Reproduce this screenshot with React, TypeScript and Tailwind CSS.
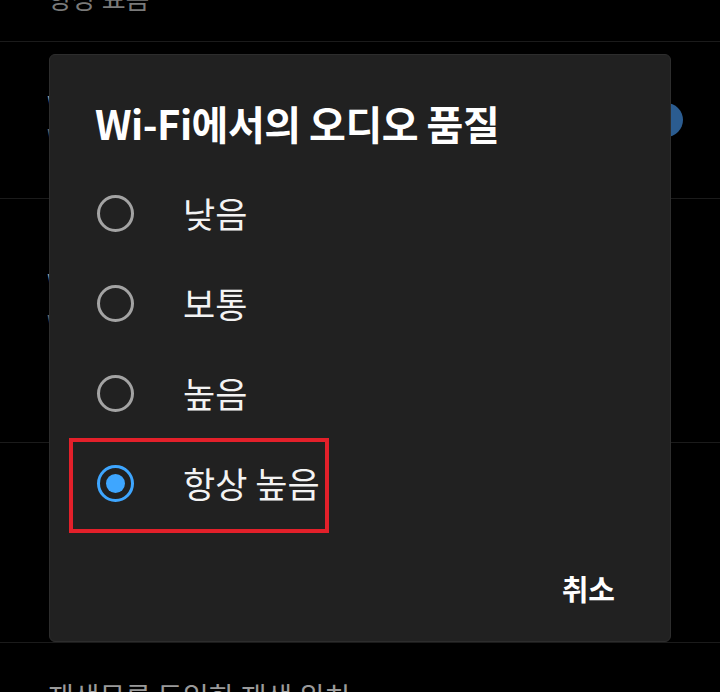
import { useState } from 'react';

const FONT = { fontFamily: '"Noto Sans CJK KR", "Noto Sans", sans-serif' };

const options = ['낮음', '보통', '높음', '항상 높음'];

function Radio({ checked }: { checked: boolean }) {
  return (
    <div
      className={`flex h-[37px] w-[37px] shrink-0 items-center justify-center rounded-full border-[3.5px] ${
        checked ? 'border-[#3ea6ff]' : 'border-[#a3a3a3]'
      }`}
    >
      {checked && <div className="h-[19px] w-[19px] rounded-full bg-[#3ea6ff]" />}
    </div>
  );
}

export default function App() {
  const [selected, setSelected] = useState(3);

  return (
    <div className="relative h-[692px] w-[720px] overflow-hidden bg-black" style={FONT}>
      {/* settings list behind the dialog */}
      <div className="flex flex-col">
        <div className="h-[42px] border-b border-[#1b1b1b] pl-[48px]">
          <p className="mt-[-18px] text-[26px] leading-[32px] text-[#7a7a7a]">항상 표음</p>
        </div>

        <div className="relative flex h-[157px] flex-col justify-center border-b border-[#1b1b1b] pl-[47px]">
          <p className="text-[28px] leading-[34px] text-[#9a9a9a]">Wi-Fi를 통해서만 스트리밍</p>
          <p className="text-[24px] leading-[30px] text-[#6a6a6a]">Wi-Fi 연결 시에만 재생</p>
          <div className="absolute left-[649px] top-[61px] h-[34px] w-[34px] rounded-full bg-[#2b5c90]" />
        </div>

        <div className="flex h-[244px] flex-col justify-center gap-[8px] border-b border-[#1b1b1b] pl-[47px]">
          <p className="text-[28px] leading-[34px] text-[#9a9a9a]">Wi-Fi에서의 오디오 품질</p>
          <p className="text-[24px] leading-[30px] text-[#6a6a6a]">Wi-Fi에서 재생할 때</p>
          <p className="text-[24px] leading-[30px] text-[#6a6a6a]">· 항상 높음</p>
        </div>

        <div className="flex h-[200px] flex-col justify-center gap-[18px] border-b border-[#1b1b1b] pl-[47px]">
          <p className="text-[24px] leading-[30px] text-[#6a6a6a]">· 모바일 데이터</p>
          <p className="text-[24px] leading-[30px] text-[#6a6a6a]">· 스트리밍 품질</p>
          <p className="text-[24px] leading-[30px] text-[#6a6a6a]">· 오프라인 저장</p>
        </div>

        <div className="pl-[48px] pt-[36px]">
          <p className="text-[28px] leading-[34px] text-[#9a9a9a]">재생목록 동일한 재생 위치</p>
        </div>
      </div>

      {/* dialog */}
      <div className="absolute left-[49px] top-[54px] flex h-[588px] w-[622px] flex-col rounded-[6px] border border-[#2d2d2d] bg-[#212121]">
        <h2 className="pl-[45px] pt-[44px] text-[40px] font-bold leading-[48px] tracking-[-0.5px] text-white">
          Wi-Fi에서의 오디오 품질
        </h2>

        <div className="mt-[21px] flex flex-col">
          {options.map((label, i) => (
            <button
              key={label}
              onClick={() => setSelected(i)}
              className="flex h-[90px] items-center pl-[47px] text-left"
            >
              <Radio checked={selected === i} />
              <span className="ml-[49px] text-[35px] leading-[42px] text-[#f3f3f3]">{label}</span>
            </button>
          ))}
        </div>

        <div className="flex flex-1 items-end justify-end pb-[33px] pr-[55px]">
          <button className="text-[29px] font-bold leading-[40px] text-white">취소</button>
        </div>

        {/* highlight box */}
        <div className="absolute left-[19px] top-[383px] h-[95px] w-[260px] border-[4px] border-[#e3202a]" />
      </div>
    </div>
  );
}
